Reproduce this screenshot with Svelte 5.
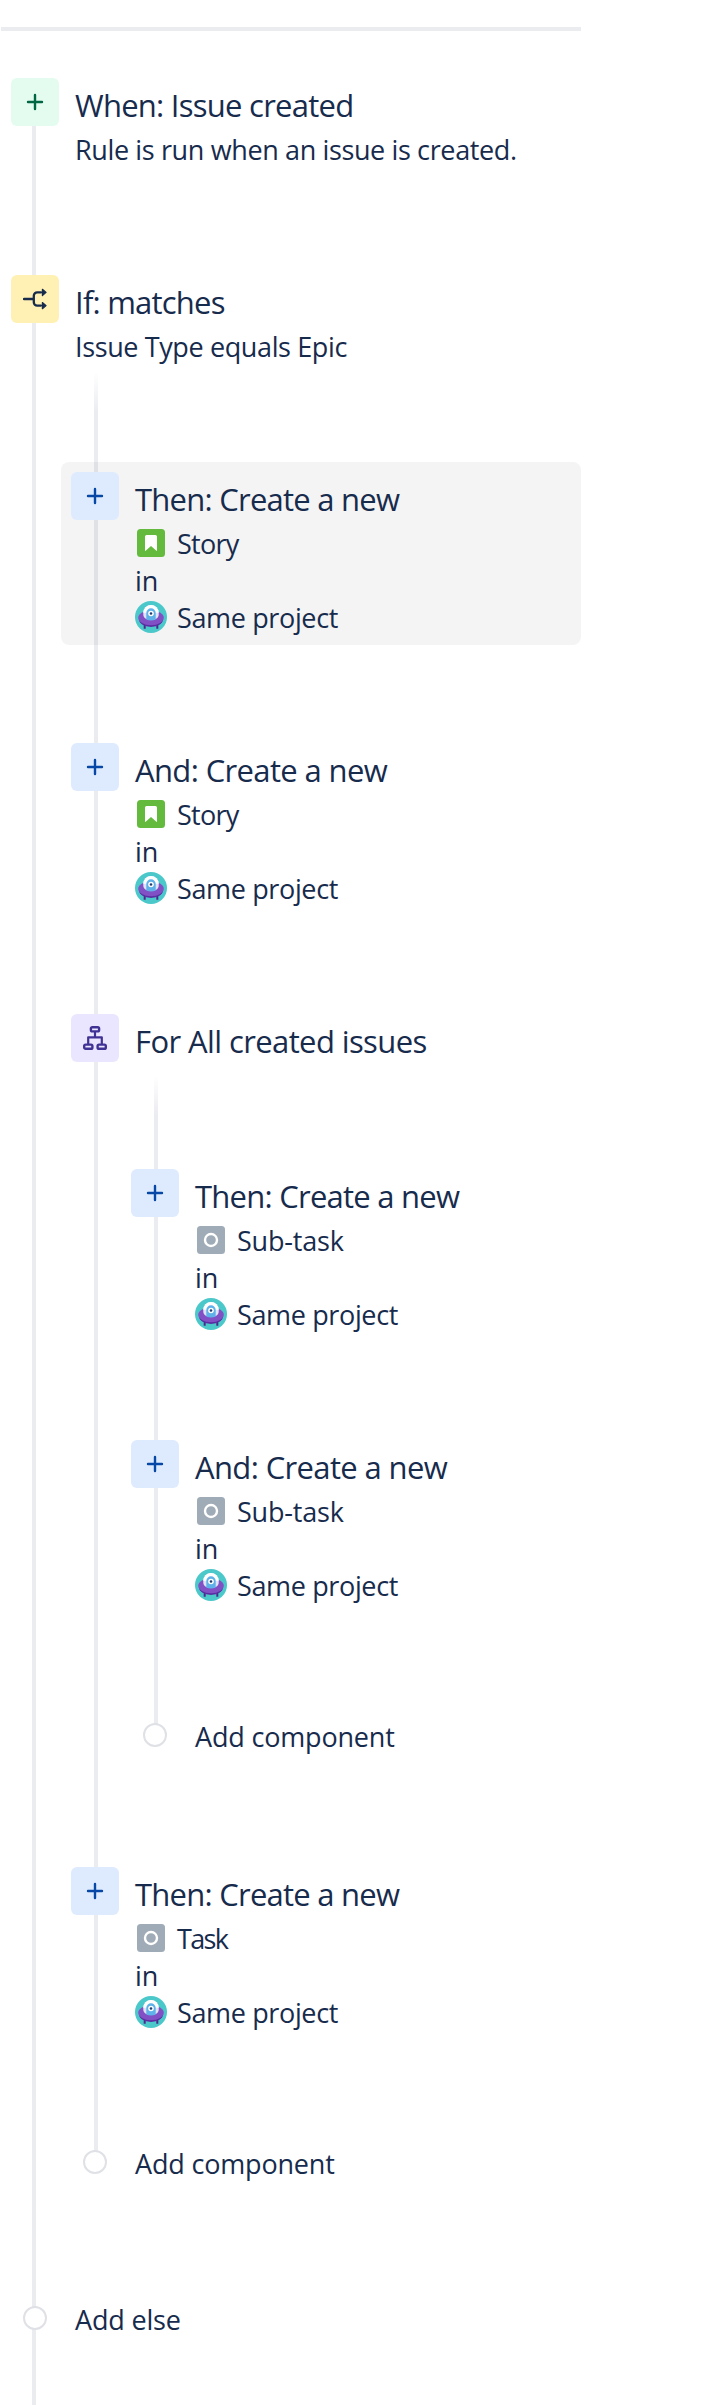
<script>
  const create = (title, tracking, type, kind, typeTracking) => ({
    icon: 'plus', tone: 'blue', title, tracking, action: { type, kind, tracking: typeTracking }
  });

  const rule = [
    { icon: 'plus', tone: 'green', title: 'When: Issue created', tracking: -0.74, text: 'Rule is run when an issue is created.', textTracking: -0.37 },
    {
      icon: 'branch', tone: 'yellow', title: 'If: matches', tracking: -0.78, text: 'Issue Type equals Epic', textTracking: -0.38,
      children: [
        { ...create('Then: Create a new', -0.75, 'Story', 'story', -0.75), selected: true },
        create('And: Create a new', -0.63, 'Story', 'story', -0.75),
        {
          icon: 'tree', tone: 'purple', title: 'For All created issues', tracking: -0.6,
          children: [
            create('Then: Create a new', -0.75, 'Sub-task', 'task', -0.2),
            create('And: Create a new', -0.63, 'Sub-task', 'task', -0.2),
            { add: 'Add component' }
          ]
        },
        create('Then: Create a new', -0.75, 'Task', 'task', -1.7),
        { add: 'Add component' }
      ]
    },
    { add: 'Add else' }
  ];
</script>

{#snippet glyph(name)}
  <svg width="24" height="24" viewBox="0 0 24 24" fill="none" stroke="currentColor" stroke-width="2.2" stroke-linecap="round" stroke-linejoin="round">
    {#if name === 'plus'}
      <path d="M12 5v14M5 12h14" stroke-width="2.4" />
    {:else if name === 'branch'}
      <path d="M1 12h9.6M18 5.4h-3.8a3.4 3.4 0 0 0-3.4 3.4v6.4a3.4 3.4 0 0 0 3.4 3.4H18" stroke-width="2.3" />
      <path d="M19.4 2.3l3.7 3.1-3.7 3.1zM19.4 15.5l3.7 3.1-3.7 3.1z" fill="currentColor" stroke-width="1.2" />
    {:else}
      <g stroke-width="2.4">
        <rect x="7.9" y="1.2" width="8.2" height="4.2" rx="1.4" />
        <rect x="1.2" y="18.6" width="8.2" height="4.2" rx="1.4" />
        <rect x="14.6" y="18.6" width="8.2" height="4.2" rx="1.4" />
        <path d="M12 6v5.3M5.2 18v-6.7h13.6V18" stroke-width="2.2" />
      </g>
    {/if}
  </svg>
{/snippet}

{#snippet typeIcon(kind)}
  <svg class="ico" width="32" height="32" viewBox="0 0 32 32">
    {#if kind === 'story'}
      <rect x="2" y="2" width="28" height="28" rx="3.5" fill="#63ba3c" />
      <path d="M10 9.6Q10 8 11.6 8h8.8Q22 8 22 9.6v13.6q0 1.2-.9.4L16 19l-5.1 4.6q-.9.8-.9-.4z" fill="#fff" />
    {:else}
      <rect x="2" y="2" width="28" height="28" rx="3.5" fill="#9fabb7" />
      <circle cx="16" cy="16" r="6" fill="none" stroke="#fff" stroke-width="2.4" />
    {/if}
  </svg>
{/snippet}

{#snippet ufo()}
  <svg class="ico" width="32" height="32" viewBox="0 0 32 32">
    <circle cx="16" cy="16" r="16" fill="#4bc8ca" />
    <path d="M9.7 23v4.7M22.3 23v4.7" stroke="#4a2a8c" stroke-width="2" />
    <ellipse cx="16" cy="18.6" rx="12" ry="7.4" fill="#5b2da3" />
    <ellipse cx="16" cy="16.8" rx="12.8" ry="7.4" fill="#8150c4" />
    <path d="M8.3 11.8a7.7 7.7 0 0 1 15.4 0v2c0 3-3 5-7.7 5s-7.7-2-7.7-5z" fill="#dfe3f5" />
    <path d="M8.3 11.8a7.7 7.7 0 0 1 15.4 0z" fill="#fff" />
    <path d="M11.3 12a4.7 4.7 0 0 1 9.4 0v6.6q-4.7 1.8-9.4 0z" fill="#5eb1e9" />
    <circle cx="16" cy="12.5" r="2.8" fill="#fff" />
    <circle cx="16" cy="12.5" r="1.3" fill="#1f3d73" />
  </svg>
{/snippet}

{#snippet branch(items, depth)}
  <div class="branch depth-{depth}">
    {#each items as item}
      {#if item.add}
        <div class="step add">
          <span class="dot"></span>
          <span class="label">{item.add}</span>
        </div>
      {:else}
        <div class="step" class:selected={item.selected} class:compact={item.children && !item.text} class:parent={item.children && item.text} class:long={item.action}>
          <span class="badge {item.tone}">{@render glyph(item.icon)}</span>
          <div class="body">
            <div class="title" style:letter-spacing="{item.tracking}px">{item.title}</div>
            {#if item.text}
              <div class="line" style:letter-spacing="{item.textTracking}px">{item.text}</div>
            {/if}
            {#if item.action}
              <div class="line">
                {@render typeIcon(item.action.kind)}
                <span style:letter-spacing="{item.action.tracking}px">{item.action.type}</span>
              </div>
              <div class="line">in</div>
              <div class="line">{@render ufo()}<span class="project">Same project</span></div>
            {/if}
          </div>
        </div>
        {#if item.children}{@render branch(item.children, depth + 1)}{/if}
      {/if}
    {/each}
  </div>
{/snippet}

<main>
  <div class="rail"></div>
  {@render branch(rule, 0)}
</main>

<style>
  :global(body) { background: #fff; }
  main {
    width: 709px;
    height: 2405px;
    box-sizing: border-box;
    padding-top: 27px;
    overflow: hidden;
    color: #172b4d;
    font-family: 'Open Sans', 'Noto Sans', sans-serif;
    white-space: nowrap;
  }
  .rail { width: 580px; height: 4px; margin: 0 0 47px 1px; background: #ebecf0; }
  .branch {
    display: flex;
    flex-direction: column;
    background-repeat: no-repeat;
    background-position: 23px 0;
    background-size: 4px 100%;
  }
  .depth-0 {
    height: 2327px;
    margin-left: 11px;
    background-position: 21px 0;
    background-image: linear-gradient(#ebecf0, #ebecf0);
  }
  .depth-1, .depth-2 {
    margin-left: 60px;
    padding-top: 100px;
    background-image: linear-gradient(transparent, #ebecf0 40px, #ebecf0 calc(100% - 140px), transparent calc(100% - 140px));
  }
  .depth-2 { padding-top: 94px; }
  .step { display: flex; gap: 16px; height: 197px; flex: none; }
  .step.long { height: 271px; }
  .step.parent { height: 97px; }
  .step.compact { height: 61px; }
  .step.selected {
    width: 510px;
    height: 173px;
    box-sizing: content-box;
    margin: -10px 0 98px -10px;
    padding: 10px 0 0 10px;
    border-radius: 8px;
    background: rgba(0, 0, 0, 0.042);
  }
  .badge {
    display: flex;
    align-items: center;
    justify-content: center;
    flex: none;
    width: 48px;
    height: 48px;
    border-radius: 6px;
  }
  .green { background: #e3fcef; color: #006644; }
  .yellow { background: #fff0b3; color: #172b4d; }
  .blue { background: #deebff; color: #0747a6; }
  .purple { background: #eae6ff; color: #403294; }
  .title { height: 53px; font-size: 31px; line-height: 55px; }
  .line { display: flex; align-items: flex-start; height: 37px; font-size: 27px; line-height: 37px; }
  .ico { flex: none; margin: 2px 10px 0 0; }
  .project { letter-spacing: -0.36px; }
  .step.add { height: 156px; gap: 28px; padding-left: 12px; }
  .dot {
    flex: none;
    box-sizing: border-box;
    width: 24px;
    height: 24px;
    margin-top: 12px;
    border: 2px solid #dfe1e6;
    border-radius: 50%;
    background: #fff;
  }
  .label { font-size: 27px; line-height: 52px; letter-spacing: -0.18px; }
</style>
